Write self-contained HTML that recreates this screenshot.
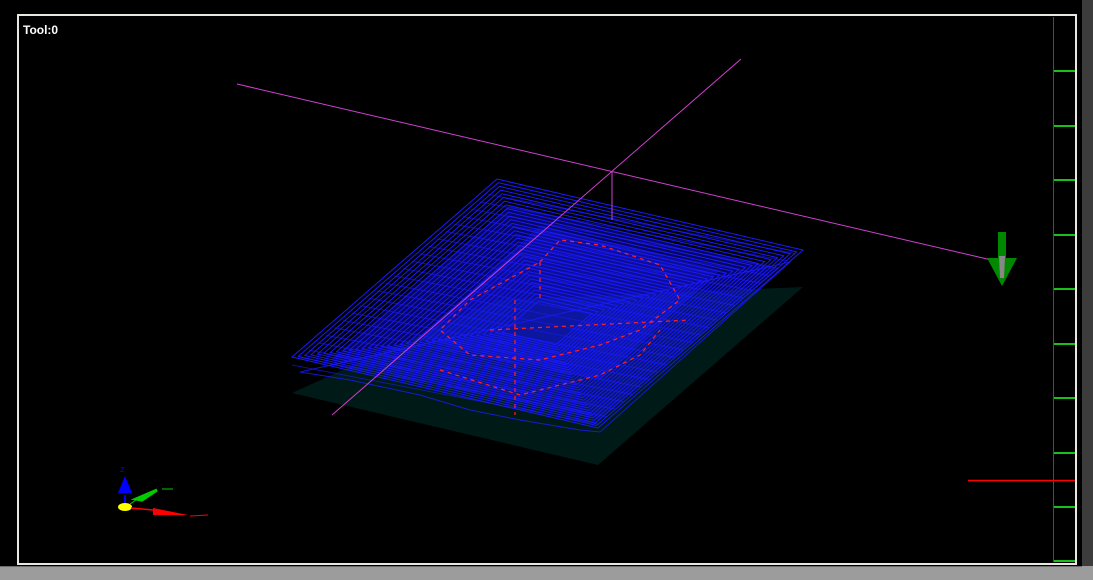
<!DOCTYPE html>
<html><head><style>
html,body{margin:0;padding:0;background:#000;width:1093px;height:580px;overflow:hidden}
</style></head><body>
<svg width="1093" height="580" viewBox="0 0 1093 580" xmlns="http://www.w3.org/2000/svg" style="display:block">
<rect width="1093" height="580" fill="#000"/>
<rect x="1082" y="0" width="11" height="580" fill="#3c3c3c"/>
<rect x="0" y="566" width="1093" height="14" fill="#9c9c9c"/>
<line x1="0" y1="566.5" x2="1082" y2="566.5" stroke="#6a6a6a"/>
<rect x="18" y="15" width="1058" height="549" fill="none" stroke="#e8e8e0" stroke-width="2"/>
<text x="23" y="34" fill="#fff" font-family="Liberation Sans, sans-serif" font-size="12" font-weight="bold">Tool:0</text>
<line x1="1053.5" y1="17" x2="1053.5" y2="562" stroke="#f00"/>
<g stroke="#2f2" stroke-width="1.5">
<line x1="1054" y1="71" x2="1075" y2="71"/><line x1="1054" y1="126" x2="1075" y2="126"/>
<line x1="1054" y1="180" x2="1075" y2="180"/><line x1="1054" y1="235" x2="1075" y2="235"/>
<line x1="1054" y1="289" x2="1075" y2="289"/><line x1="1054" y1="344" x2="1075" y2="344"/>
<line x1="1054" y1="398" x2="1075" y2="398"/><line x1="1054" y1="453" x2="1075" y2="453"/>
<line x1="1054" y1="507" x2="1075" y2="507"/><line x1="1054" y1="561" x2="1075" y2="561"/>
</g>
<line x1="968" y1="480.5" x2="1075" y2="480.5" stroke="#f00" stroke-width="1.5"/>
<polygon points="292,393 497,300 803,287 598,465" fill="#001a18"/>
<polygon points="330,360 510,205 780,268 600,420" fill="#1010d0" fill-opacity="0.45"/>
<polygon points="420,340 540,225 720,270 600,380" fill="#1a1aff" fill-opacity="0.35"/>
<g id="w" fill="none" stroke="#1a1aff" stroke-width="1"></g>
<g stroke="#f22" stroke-width="1.2" stroke-dasharray="4,4" fill="none">
<polyline points="540,262 560,240 600,245 660,265 680,300 640,330 600,345 540,360 470,355 440,330 470,300 540,262"/>
<polyline points="440,370 520,395 600,375 640,355 660,330"/>
<line x1="515" y1="300" x2="515" y2="415"/>
<line x1="490" y1="330" x2="690" y2="320"/>
<line x1="540" y1="262" x2="540" y2="300"/>
</g>
<g stroke="#d040d0" stroke-width="1">
<line x1="237" y1="84" x2="1000" y2="262"/>
<line x1="741" y1="59" x2="332" y2="415"/>
<line x1="612" y1="172" x2="612" y2="220"/>
</g>
<rect x="998" y="232" width="8" height="28" fill="#080"/>
<polygon points="987,258 1017,258 1002,286" fill="#080"/>
<polygon points="999,256 1005,256 1004,278 1000,278" fill="#888"/>
<g>
<line x1="125" y1="495" x2="125" y2="507" stroke="#00f" stroke-width="2"/>
<polygon points="125,476 118,493 132,493" fill="#00f"/>
<text x="120" y="472" fill="#00f" font-size="9" font-family="Liberation Sans, sans-serif">z</text>
<ellipse cx="125" cy="507" rx="7" ry="4" fill="#ff0"/>
<polygon points="136,499 157,490 142,500" fill="#0c0" stroke="#0c0" stroke-width="3"/>
<line x1="130" y1="504" x2="136" y2="500" stroke="#0c0"/>
<line x1="162" y1="489" x2="173" y2="489" stroke="#0c0"/>
<polygon points="153,508 188,515 153,515" fill="#f00"/>
<line x1="131" y1="508" x2="153" y2="510" stroke="#f00" stroke-width="1.5"/>
<line x1="190" y1="516" x2="208" y2="515" stroke="#f00"/>
</g>
</svg>
<script>
var g=document.getElementById('w'),s='';
var L=[292,357],T=[497,179],R=[803,250],B=[598,428],C=[547,303];
function lerp(a,b,t){return [a[0]+(b[0]-a[0])*t,a[1]+(b[1]-a[1])*t];}
for(var i=0;i<34;i++){var t=i/40;var pts=[L,T,R,B].map(function(p){var q=lerp(p,C,t);return q[0].toFixed(1)+','+(q[1]+i*0.6).toFixed(1);});
s+='<polygon points="'+pts.join(' ')+'"/>';}
for(var i=0;i<24;i++){var t=i/24;var a=lerp(L,T,t),b=lerp(B,R,t);s+='<line x1="'+a[0]+'" y1="'+(a[1]+8)+'" x2="'+b[0]+'" y2="'+(b[1]-4)+'" stroke-opacity="0.6"/>';}
s+='<polygon points="300,372 350,380 420,395 470,410 520,420 580,430 600,432 790,262" stroke-opacity="0.8"/>';
g.innerHTML=s;
</script>
</body></html>
